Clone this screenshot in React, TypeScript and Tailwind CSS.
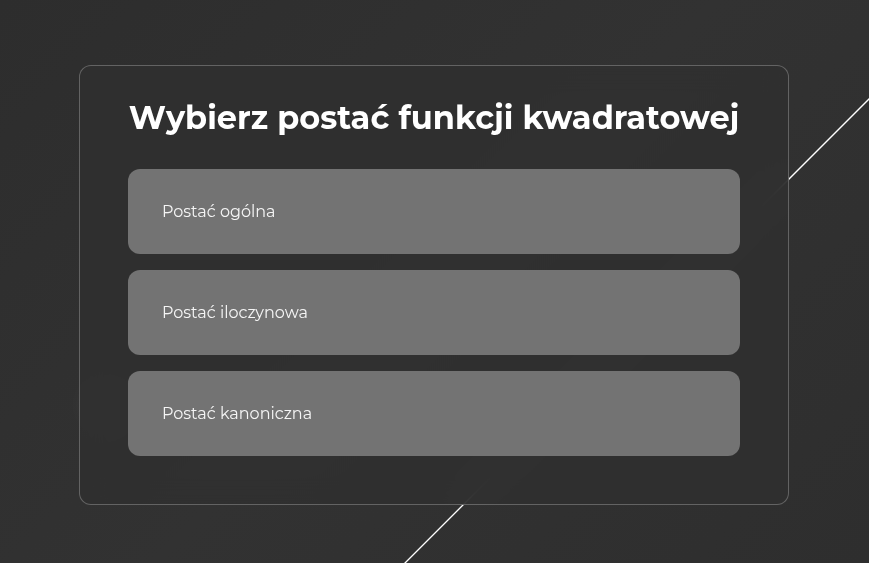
import React from "react"

const options = ["Postać ogólna", "Postać iloczynowa", "Postać kanoniczna"]

export default function App() {
  return (
    <div
      className="relative h-[563px] w-full overflow-hidden bg-[linear-gradient(135deg,#2d2d2d_0%,#323232_50%,#2e2e2e_100%)]"
      style={{ fontFamily: "Montserrat, 'Open Sans', Lato, sans-serif" }}
    >
      {/* decorative diagonal line + glow behind the card */}
      <svg className="absolute inset-0 h-full w-full" viewBox="0 0 869 563">
        <line x1="404" y1="564" x2="870" y2="98" stroke="#ffffff" strokeWidth="1.3" />
      </svg>
      <div className="absolute left-[88px] top-[390px] h-[30px] w-[30px] rounded-full bg-white/10 blur-md" />

      <div className="relative ml-[79px] mt-[65px] w-[710px] rounded-xl border border-white/25 bg-[#303030]/90 px-12 pb-12 pt-8 backdrop-blur-md">
        <h1 className="whitespace-nowrap text-center text-[32px] font-bold leading-[40px] text-white">
          Wybierz postać funkcji kwadratowej
        </h1>
        <div className="mt-[31px] flex flex-col gap-4">
          {options.map((o) => (
            <button
              key={o}
              className="flex h-[85px] items-center rounded-xl bg-[#737373] pl-[34px] text-left text-[16px] text-[#f5f5f5]"
            >
              {o}
            </button>
          ))}
        </div>
      </div>
    </div>
  )
}
